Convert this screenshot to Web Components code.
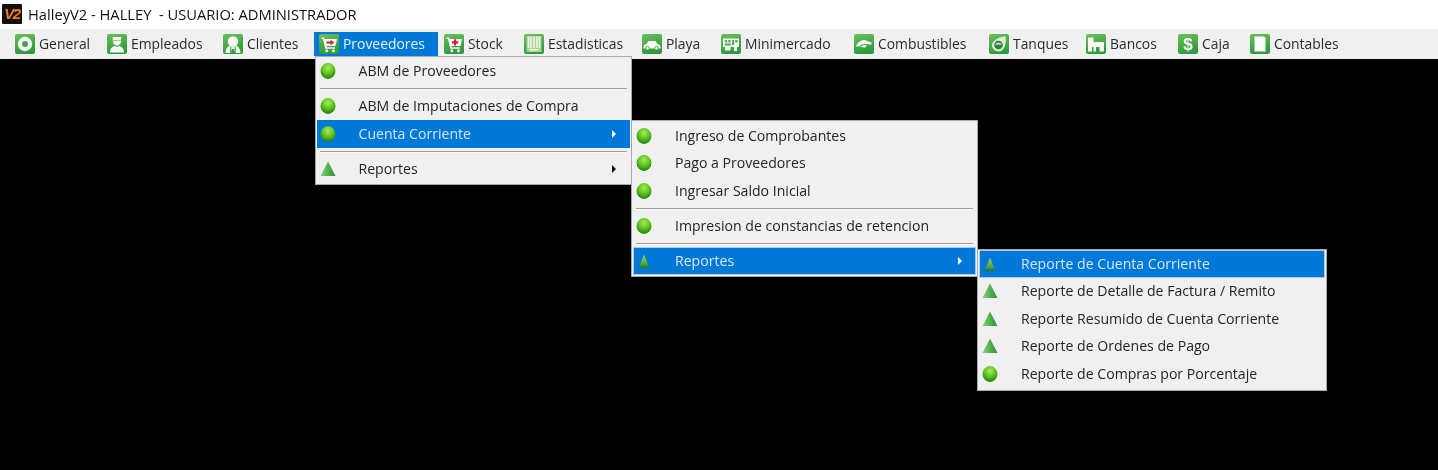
<!DOCTYPE html>
<html lang="es">
<head>
<meta charset="utf-8">
<title>HalleyV2</title>
<style>
  html, body { margin: 0; height: 100%; background: #000; overflow: hidden; }
</style>
</head>
<body>
<halley-app>
  <title-strip>HalleyV2 - HALLEY&nbsp; - USUARIO: ADMINISTRADOR</title-strip>
  <main-menu>
    <main-entry icon="general" w="92">General</main-entry>
    <main-entry icon="empleados" w="116">Empleados</main-entry>
    <main-entry icon="clientes" w="96">Clientes</main-entry>
    <main-entry icon="proveedores" w="124" active>Proveedores</main-entry>
    <main-entry icon="stock" w="80">Stock</main-entry>
    <main-entry icon="estadisticas" w="118">Estadisticas</main-entry>
    <main-entry icon="playa" w="79">Playa</main-entry>
    <main-entry icon="minimercado" w="133">Minimercado</main-entry>
    <main-entry icon="combustibles" w="135">Combustibles</main-entry>
    <main-entry icon="tanques" w="97">Tanques</main-entry>
    <main-entry icon="bancos" w="92">Bancos</main-entry>
    <main-entry icon="caja" w="72">Caja</main-entry>
    <main-entry icon="contables" w="100">Contables</main-entry>
  </main-menu>

  <pop-menu x="314.5" y="55.5" w="317.5">
    <pop-item icon="orb">ABM de Proveedores</pop-item>
    <pop-sep></pop-sep>
    <pop-item icon="orb">ABM de Imputaciones de Compra</pop-item>
    <pop-item icon="orb" active arrow>Cuenta Corriente</pop-item>
    <pop-sep></pop-sep>
    <pop-item icon="tri" arrow>Reportes</pop-item>
  </pop-menu>

  <pop-menu x="631" y="120" w="346.5">
    <pop-item icon="orb">Ingreso de Comprobantes</pop-item>
    <pop-item icon="orb">Pago a Proveedores</pop-item>
    <pop-item icon="orb">Ingresar Saldo Inicial</pop-item>
    <pop-sep></pop-sep>
    <pop-item icon="orb">Impresion de constancias de retencion</pop-item>
    <pop-sep></pop-sep>
    <pop-item icon="tri" active outlined arrow>Reportes</pop-item>
  </pop-menu>

  <pop-menu x="977" y="249" w="350" tight>
    <pop-item icon="tri" active outlined>Reporte de Cuenta Corriente</pop-item>
    <pop-item icon="tri">Reporte de Detalle de Factura / Remito</pop-item>
    <pop-item icon="tri">Reporte Resumido de Cuenta Corriente</pop-item>
    <pop-item icon="tri">Reporte de Ordenes de Pago</pop-item>
    <pop-item icon="orb">Reporte de Compras por Porcentaje</pop-item>
  </pop-menu>
</halley-app>

<script>
(() => {
  const FONT = '"Open Sans", "Noto Sans", "Liberation Sans", sans-serif';
  const W = "#f6f9f2";
  const CART = `<path d="M2.500 3.500H5l.6 1.500H18l-1.500 7H7.500l.3 1.300H16v1.500H6.300L4 5H2.500z" fill="${W}"/><circle cx="7.800" cy="16.800" r="1.500" fill="${W}"/><circle cx="14.500" cy="16.800" r="1.500" fill="${W}"/>`;

  // white glyphs on the green tile used by the top menu
  const GLYPHS = {
    general: `<circle cx="10" cy="10" r="7.200" fill="${W}"/><circle cx="10" cy="10" r="3" fill="#4b9f52"/>`,
    empleados: `<path d="M5.800 3h8.400v3.800c0 3-1.800 4.900-4.200 4.900S5.800 9.800 5.800 6.800z" fill="${W}"/><path d="M3 18.500c0-4 2.200-5.800 4.800-6.500l2.200 1 2.200-1c2.600.7 4.800 2.500 4.800 6.500z" fill="${W}"/><path d="M6 6.400h8" stroke="#8fc98b" stroke-width="1"/>`,
    clientes: `<circle cx="10" cy="7.500" r="5.200" fill="${W}"/><path d="M2.500 19c0-4.500 2.500-7 5-7.500l-.6 7.500zM17.500 19c0-4.500-2.500-7-5-7.500l.6 7.500z" fill="${W}"/><path d="M8.500 12h3l.8 7H7.700z" fill="#e3efdd"/><path d="M8 19l.8-4h2.400l.8 4z" fill="#3f9a45"/>`,
    proveedores: CART + '<path d="M7.500 7.500h4V5.800l3.800 2.700-3.800 2.700V9.500h-4z" fill="#d6203a"/>',
    stock: CART + '<path d="M10 5.300h2.200v2h2v2.200h-2v2H10v-2H8v-2.200h2z" fill="#d6203a"/>',
    estadisticas: '<rect x="2.500" y="2" width="15" height="16" fill="#a9d49a"/><path d="M4.500 2.500v11.500M7 2.500v11.500M10 2.500v11.500M13 2.500v11.500M15.500 2.500v11.500" stroke="#f2f7e8" stroke-width="1.500"/><rect x="5.500" y="15" width="9" height="1.600" fill="#edf5e2"/>',
    playa: `<path d="M1.500 13c0-1.800 1-2.500 2.800-2.800L6.500 7h7l2.200 3.200c1.800.3 2.800 1 2.800 2.800v1.500h-17z" fill="${W}"/><circle cx="5.500" cy="14.300" r="1.800" fill="${W}" stroke="#3f9a45" stroke-width=".8"/><circle cx="14.500" cy="14.300" r="1.800" fill="${W}" stroke="#3f9a45" stroke-width=".8"/>`,
    minimercado: `<rect x="2" y="4.500" width="16" height="8.500" fill="${W}"/><rect x="4" y="13" width="5.500" height="3.500" fill="${W}"/><rect x="13" y="13" width="3" height="4" fill="${W}"/><path d="M3.800 6h2.400v2.400H3.800zM7.200 6h2.400v2.400H7.200zM11 6h2v5h-2zM14.200 6h2.400v2.400h-2.400zM3.800 9.500h6v2h-6z" fill="#5aa95c"/>`,
    combustibles: `<path d="M2 12.500c1.400-4 4.800-6.500 8.400-6.500l7 2.400v2.400l-6.800-1.100c-2.200 0-3.800 1-4.800 2.800z" fill="${W}"/><path d="M6.500 12.800l3.500-2.300 3 1.300-2.400 1.900z" fill="${W}"/>`,
    tanques: `<path d="M3 11.500C3 7 8 3.500 16.500 2 17 6 17 8 16 12c-1 3.500-3.500 5.500-6.500 5.500S3 15 3 11.500z" fill="#d9eacf"/><circle cx="9.500" cy="11" r="4.300" fill="#2e7f45"/><path d="M6 10.800a3.800 3.800 0 0 1 7 0z" fill="#b9d8b2"/>`,
    bancos: `<path d="M2 17.500V3.500h5.500V8h10.500v9.500h-4.500V13h-3.500v4.500H7.500V13H6v4.500z" fill="${W}"/>`,
    caja: `<text x="10" y="16" text-anchor="middle" font-family="Liberation Sans, sans-serif" font-weight="700" font-size="17" fill="${W}">$</text>`,
    contables: '<path d="M4.500 2.500h9.500l1.500 1.500v13.500H4.500z" fill="#fbfdf9"/>',
  };

  class MenuIcon extends HTMLElement {
    connectedCallback() {
      const root = this.attachShadow({ mode: "open" });
      root.innerHTML =
        "<style>:host{display:block;width:20px;height:20px;flex:0 0 auto}svg{display:block}</style>" +
        '<svg width="20" height="20" viewBox="0 0 20 20" aria-hidden="true">' +
        '<defs><linearGradient id="g" x1="0" y1="0" x2=".3" y2="1"><stop offset="0" stop-color="#6cbf5d"/><stop offset="1" stop-color="#2f9a3f"/></linearGradient></defs>' +
        '<rect width="20" height="20" rx="2" fill="url(#g)"/>' +
        (GLYPHS[this.getAttribute("name")] || "") +
        "</svg>";
    }
  }

  // the small green ball and cone in front of every dropdown row
  class BulletIcon extends HTMLElement {
    connectedCallback() {
      const root = this.attachShadow({ mode: "open" });
      const kind = this.getAttribute("name");
      let shape;
      if (kind === "tri") {
        shape = '<defs><linearGradient id="t" x1="0" y1="0" x2="1" y2="0"><stop offset="0" stop-color="#8dd07a"/><stop offset=".55" stop-color="#4cae4f"/><stop offset="1" stop-color="#2f8a3c"/></linearGradient></defs>' +
          '<path d="M8 .5L15.500 15H.5z" fill="url(#t)"/>';
      } else if (kind === "tri-on") {
        // on the blue row the cone loses its light edges and reads narrower
        shape = '<defs><linearGradient id="t" x1="0" y1="0" x2="0" y2="1"><stop offset="0" stop-color="#9ad07a"/><stop offset=".7" stop-color="#4ea63f"/><stop offset="1" stop-color="#23702e"/></linearGradient></defs>' +
          '<path d="M8 1.500L13.500 15H2.500z" fill="url(#t)"/>';
      } else {
        shape = '<defs><radialGradient id="o" cx=".5" cy=".3" r=".7"><stop offset="0" stop-color="#a8ea5a"/><stop offset=".55" stop-color="#5cc21c"/><stop offset="1" stop-color="#1f7d12"/></radialGradient></defs>' +
          '<ellipse cx="8" cy="8" rx="7.500" ry="7.900" fill="url(#o)"/>';
      }
      root.innerHTML =
        "<style>:host{display:block;width:16px;height:16px}svg{display:block}</style>" +
        '<svg width="16" height="16" viewBox="0 0 16 16" aria-hidden="true">' + shape + "</svg>";
    }
  }

  class HalleyApp extends HTMLElement {
    connectedCallback() {
      this.attachShadow({ mode: "open" }).innerHTML =
        "<style>:host{display:block;position:relative;width:1438px;height:470px;background:#000;overflow:hidden;filter:blur(.3px);" +
        "font-family:" + FONT + ";font-size:14px;color:#1b1b1b}</style><slot></slot>";
    }
  }

  class TitleStrip extends HTMLElement {
    connectedCallback() {
      this.attachShadow({ mode: "open" }).innerHTML = `
        <style>
          :host { display: flex; align-items: center; height: 29px; background: #fff; padding-left: 2px; gap: 6px; color: #111; font-size: 14.7px; }
          .logo { width: 20px; height: 20px; margin-top: -1px; background: #111; border-radius: 1px; display: flex; align-items: center; justify-content: center;
            font: italic 700 15px/20px "Liberation Sans", sans-serif; letter-spacing: -1.5px; color: #ef7d22; overflow: hidden; }
          .t { white-space: pre; margin-top: -1px; }
        </style>
        <span class="logo">V2</span><span class="t"><slot></slot></span>`;
    }
  }

  class MainMenu extends HTMLElement {
    connectedCallback() {
      this.attachShadow({ mode: "open" }).innerHTML =
        "<style>:host{display:flex;align-items:center;height:30px;background:#f0f0f0;padding-left:10px;box-sizing:border-box}</style><slot></slot>";
    }
  }

  class MainEntry extends HTMLElement {
    connectedCallback() {
      this.attachShadow({ mode: "open" }).innerHTML = `
        <style>
          :host { display: flex; align-items: center; gap: 4px; box-sizing: border-box; padding-left: 5px; height: 24px; white-space: nowrap; color: #2a2a2a; font-size: 13.9px; }
          :host([active]) { background: #0078d7; color: #eaf3fb; margin-right: 1px; }
          .t { margin-top: -2px; }
        </style>
        <menu-icon name="${this.getAttribute("icon")}"></menu-icon><span class="t"><slot></slot></span>`;
      this.style.width = this.getAttribute("w") + "px";
    }
  }

  class PopMenu extends HTMLElement {
    connectedCallback() {
      this.attachShadow({ mode: "open" }).innerHTML = `
        <style>
          :host { position: absolute; display: block; box-sizing: border-box; padding: 1px; background: #f0f0f0; border: 1px solid #a9a9a9; }
          :host([tight]) { padding-top: 0; padding-bottom: 2px; }
        </style>
        <slot></slot>`;
      this.style.left = this.getAttribute("x") + "px";
      this.style.top = this.getAttribute("y") + "px";
      this.style.width = this.getAttribute("w") + "px";
    }
  }

  class PopItem extends HTMLElement {
    connectedCallback() {
      const arrow = this.hasAttribute("arrow") ? '<span class="arrow"></span>' : "";
      const active = this.hasAttribute("active");
      const icon = this.getAttribute("icon");
      const bullet = icon === "tri" && active && this.hasAttribute("outlined") ? "tri-on" : icon;
      this.attachShadow({ mode: "open" }).innerHTML = `
        <style>
          :host { display: flex; align-items: center; box-sizing: border-box; height: 27.5px; white-space: nowrap; color: #242424; font-size: 14.1px; }
          :host([active]) { background: #0078d7; color: #d6e9fa; }
          :host([outlined]) { outline: 1px solid #a8cdee; outline-offset: -1px; }
          bullet-icon { margin-left: 3px; }
          .label { margin-left: 23px; flex: 1; margin-top: -1px; }
          .arrow { width: 0; height: 0; margin-right: 14px; border-left: 4px solid #111; border-top: 4px solid transparent; border-bottom: 4px solid transparent; }
          :host([active]) .arrow { border-left-color: #fff; }
        </style>
        <bullet-icon name="${bullet}"></bullet-icon>
        <span class="label"><slot></slot></span>${arrow}`;
    }
  }

  class PopSep extends HTMLElement {
    connectedCallback() {
      this.attachShadow({ mode: "open" }).innerHTML =
        "<style>:host{display:flex;align-items:center;height:7.5px;padding:0 3px}i{display:block;flex:1;height:1px;background:#9c9c9c;box-shadow:0 1px 0 #fafafa}</style><i></i>";
    }
  }

  customElements.define("menu-icon", MenuIcon);
  customElements.define("bullet-icon", BulletIcon);
  customElements.define("halley-app", HalleyApp);
  customElements.define("title-strip", TitleStrip);
  customElements.define("main-menu", MainMenu);
  customElements.define("main-entry", MainEntry);
  customElements.define("pop-menu", PopMenu);
  customElements.define("pop-item", PopItem);
  customElements.define("pop-sep", PopSep);
})();
</script>
</body>
</html>
